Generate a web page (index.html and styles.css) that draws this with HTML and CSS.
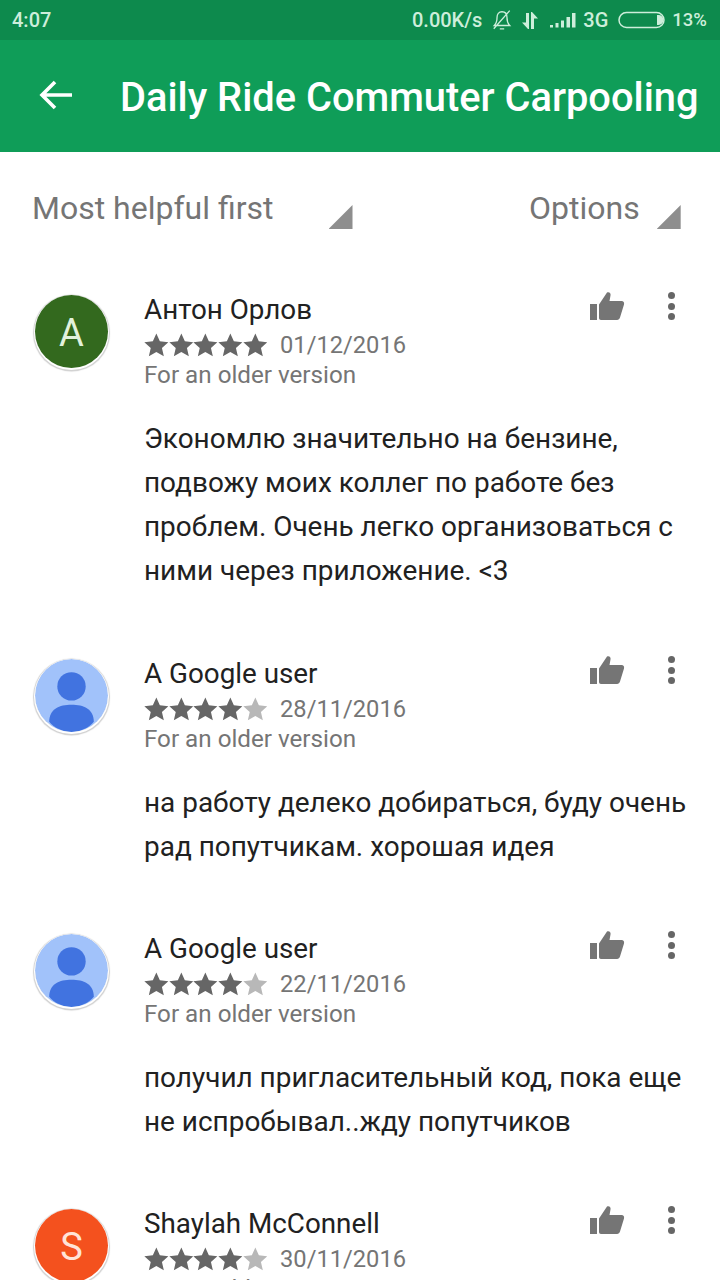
FILE: index.html
```html
<!DOCTYPE html>
<html lang="en">
<head>
<meta charset="utf-8">
<title>Reviews</title>
<link rel="stylesheet" href="styles.css">
</head>
<body>
<svg class="defs" width="0" height="0">
  <defs>
    <symbol id="star" viewBox="0 0 24 24"><path d="M12 .5l3.500 7.800 8.500.9-6.400 5.700 1.900 8.400-7.500-4.300-7.500 4.300 1.900-8.400L0 9.200l8.500-.9z"/></symbol>
    <symbol id="thumb" viewBox="0 0 36 30"><path d="M1 13h7v16H1zM10 13.500L18 1.500c2.500-.8 4 .8 3.500 3L20.500 10H32.500c2 0 3 1.500 2.500 3.500L31 26.500c-.5 1.500-1.500 2.500-3 2.500H12c-1.200 0-2-.8-2-2z"/></symbol>
    <symbol id="person" viewBox="0 0 72 72"><circle cx="36" cy="36" r="36" fill="#a1c2fa"/><circle cx="36" cy="27" r="14" fill="#4173e0"/><path d="M14 62c0-13 10-17 22-17s22 4 22 17c-5 6-13 10-22 10s-17-4-22-10z" fill="#4173e0"/></symbol>
  </defs>
</svg>
<header class="top">
  <div class="status">
    <span class="time">4:07</span>
    <div class="status-right">
      <span>0.00K/s</span>
      <svg class="ic-bell" viewBox="0 0 20 20"><path d="M10 2.500c-3 0-4.500 2.300-4.500 5 0 4-1 6-2.500 7.500h14c-1.500-1.500-2.500-3.500-2.500-7.500 0-2.700-1.500-5-4.500-5zM8 18h4M2.500 18L17 1.500" fill="none" stroke="#cdeedb" stroke-width="1.200"/></svg>
      <svg class="ic-arrows" viewBox="0 0 18 19"><path d="M5 2h3v16l-1 0L1 11.500h4zM10 1h1l6 6.500h-4V18h-3z" fill="#cdeedb"/></svg>
      <svg class="ic-signal" viewBox="0 0 26 16"><path d="M0 13h3v2.500H0zM5.500 11h3v4.500h-3zM11 8.500h3v7h-3zM16.500 5h3.500v10.500h-3.500zM22 1h3.500v14.500H22z" fill="#cdeedb"/></svg>
      <span>3G</span>
      <svg class="ic-batt" viewBox="0 0 48 18"><rect x="1" y="1.500" width="45" height="15" rx="7.500" fill="none" stroke="#cdeedb" stroke-width="1.500"/><path d="M39 4h1.500a5 5 0 0 1 0 10H39z" fill="#cdeedb"/></svg>
      <span class="pct">13%</span>
    </div>
  </div>
  <div class="appbar">
    <svg class="back" viewBox="0 0 36 32"><path d="M34 16H4M17 3L4 16l13 13" fill="none" stroke="#fff" stroke-width="3.600"/></svg>
    <h1>Daily Ride Commuter Carpooling</h1>
  </div>
</header>
<div class="filters">
  <div class="filter filter-sort"><span>Most helpful first</span><i class="tri"></i></div>
  <div class="filter filter-opt"><span>Options</span><i class="tri"></i></div>
</div>
<main class="list">
  <article class="review r1">
    <div class="avatar letter green">А</div>
    <div class="body">
      <div class="name">Антон Орлов</div>
      <div class="meta"><span class="stars"><svg class="on"><use href="#star"/></svg><svg class="on"><use href="#star"/></svg><svg class="on"><use href="#star"/></svg><svg class="on"><use href="#star"/></svg><svg class="on"><use href="#star"/></svg></span><span class="date">01/12/2016</span></div>
      <div class="ver">For an older version</div>
      <p class="text">Экономлю значительно на бензине, подвожу моих коллег по работе без проблем. Очень легко организоваться с ними через приложение. &lt;3</p>
    </div>
    <div class="actions"><svg class="thumb"><use href="#thumb"/></svg><div class="more"><b></b><b></b><b></b></div></div>
  </article>
  <article class="review r2">
    <svg class="avatar"><use href="#person"/></svg>
    <div class="body">
      <div class="name">A Google user</div>
      <div class="meta"><span class="stars"><svg class="on"><use href="#star"/></svg><svg class="on"><use href="#star"/></svg><svg class="on"><use href="#star"/></svg><svg class="on"><use href="#star"/></svg><svg class="off"><use href="#star"/></svg></span><span class="date">28/11/2016</span></div>
      <div class="ver">For an older version</div>
      <p class="text">на работу делеко добираться, буду очень рад попутчикам. хорошая идея</p>
    </div>
    <div class="actions"><svg class="thumb"><use href="#thumb"/></svg><div class="more"><b></b><b></b><b></b></div></div>
  </article>
  <article class="review r3">
    <svg class="avatar"><use href="#person"/></svg>
    <div class="body">
      <div class="name">A Google user</div>
      <div class="meta"><span class="stars"><svg class="on"><use href="#star"/></svg><svg class="on"><use href="#star"/></svg><svg class="on"><use href="#star"/></svg><svg class="on"><use href="#star"/></svg><svg class="off"><use href="#star"/></svg></span><span class="date">22/11/2016</span></div>
      <div class="ver">For an older version</div>
      <p class="text">получил пригласительный код, пока еще не испробывал..жду попутчиков</p>
    </div>
    <div class="actions"><svg class="thumb"><use href="#thumb"/></svg><div class="more"><b></b><b></b><b></b></div></div>
  </article>
  <article class="review r4">
    <div class="avatar letter orange">S</div>
    <div class="body">
      <div class="name">Shaylah McConnell</div>
      <div class="meta"><span class="stars"><svg class="on"><use href="#star"/></svg><svg class="on"><use href="#star"/></svg><svg class="on"><use href="#star"/></svg><svg class="on"><use href="#star"/></svg><svg class="off"><use href="#star"/></svg></span><span class="date">30/11/2016</span></div>
      <div class="ver">For an older version</div>
    </div>
    <div class="actions"><svg class="thumb"><use href="#thumb"/></svg><div class="more"><b></b><b></b><b></b></div></div>
  </article>
</main>
</body>
</html>
```
FILE: styles.css
```css
* { box-sizing: border-box; }
html, body { margin: 0; padding: 0; }
body { width: 720px; height: 1280px; overflow: hidden; background: #fff; font-family: Roboto, "Noto Sans", sans-serif; color: #212121; }
.defs { display: block; height: 0; }
.top { background: #0f9d58; }
.status { height: 40px; background: #0d8a4d; color: #cdeedb; display: flex; align-items: center; justify-content: space-between; padding: 0 13px 0 12px; font-size: 20px; font-weight: 500; }
.status-right { display: flex; align-items: center; }
.ic-bell { width: 22px; height: 22px; margin-left: 9px; }
.ic-arrows { width: 18px; height: 19px; margin-left: 8px; }
.ic-signal { width: 26px; height: 16px; margin-left: 11px; }
.status-right span:nth-of-type(2) { margin-left: 7px; }
.ic-batt { width: 48px; height: 18px; margin-left: 10px; }
.status-right .pct { margin-left: 6px; font-size: 18.500px; }
.appbar { height: 112px; display: flex; align-items: center; padding: 0 0 0 38px; }
.back { width: 36px; height: 32px; flex: none; margin-top: -2px; }
.appbar h1 { margin: 4px 0 0 46px; font-size: 39.800px; font-weight: 500; color: #fff; white-space: nowrap; line-height: 1; }
.filters { height: 112px; display: flex; font-size: 32px; color: #757575; }
.filter { display: flex; }
.filter span { margin-top: 38px; line-height: 36px; }
.filter-sort { width: 529px; padding-left: 32px; }
.filter-sort .tri { margin-left: 55px; }
.filter-opt .tri { margin-left: 17px; }
.tri { display: block; width: 24px; height: 24px; margin-top: 53px; background: #8e8e8e; clip-path: polygon(100% 0, 100% 100%, 0 100%); }
.list { display: flex; flex-direction: column; }
.review { display: flex; padding-left: 35px; position: relative; }
.r1 { height: 364px; padding-top: 32px; }
.r2 { height: 275px; padding-top: 32px; }
.r3 { height: 275px; padding-top: 32px; }
.r4 { height: 120px; padding-top: 32px; }
.avatar { width: 73px; height: 73px; border-radius: 50%; flex: none; box-shadow: 0 1px 0 1px #fff, 0 1.500px 1px 2px #d0d0d0; margin-top: -1px; }
.letter { display: flex; align-items: center; justify-content: center; padding-top: 2px; font-size: 38px; color: #e2f2dc; }
.green { background: #33691e; }
.orange { background: #f4511e; color: #ffe3d8; }
.body { width: 560px; flex: none; padding-left: 37px; margin-left: -1px; }
.name { font-size: 27.800px; line-height: 32px; margin-top: -2px; color: #212121; }
.meta { display: flex; align-items: center; height: 30px; margin-top: 4px; }
.stars { display: flex; width: 136px; }
.stars svg { width: 24.700px; height: 24px; flex: none; }
.on { fill: #666; }
.off { fill: #b8b8b8; }
.date { font-size: 23.700px; color: #757575; }
.ver { font-size: 24.200px; line-height: 30px; color: #757575; }
.text { margin: 26.500px 0 0; width: 550px; font-size: 27.950px; line-height: 44.300px; color: #212121; }
.actions { position: absolute; left: 589px; top: 32px; display: flex; }
.thumb { width: 36px; height: 30px; fill: #757575; margin-top: -5px; }
.more { margin-left: 43px; margin-top: -4px; display: flex; flex-direction: column; gap: 3.500px; }
.more b { display: block; width: 7px; height: 7px; border-radius: 50%; background: #666; }
```
